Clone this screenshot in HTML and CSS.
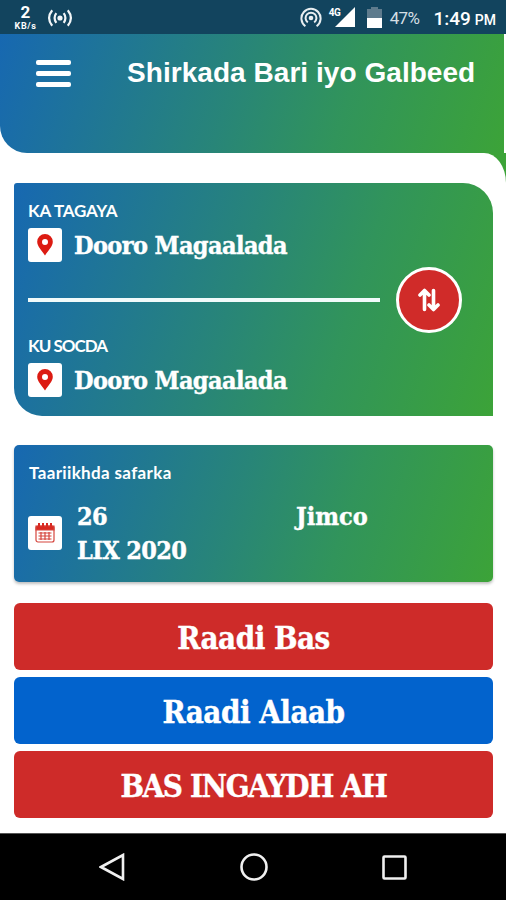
FILE: index.html
```html
<!DOCTYPE html>
<html lang="so">

<head>
    <meta charset="UTF-8">
    <meta name="viewport" content="width=device-width, initial-scale=1.0">
    <title>Shirkada Bari iyo Galbeed</title>
    <link rel="stylesheet" href="styles.css">
</head>

<body>
    <div class="status-bar">
        <div class="net-speed">
            <span class="speed">2</span>
            <span class="unit">KB/s</span>
        </div>
        <svg class="broadcast" width="26" height="18" viewBox="0 0 26 18" fill="none" stroke="#f2f6f8" stroke-width="2.2">
            <circle cx="13" cy="9" r="2.6" fill="#f2f6f8" stroke="none"></circle>
            <path d="M9.300 4.200q-3.400 4.800 0 9.600M16.700 4.200q3.400 4.800 0 9.600M5.200 1.200q-6.200 7.800 0 15.600M20.800 1.200q6.200 7.800 0 15.600"></path>
        </svg>
        <div class="status-right">
            <svg class="hotspot" width="22" height="21" viewBox="0 0 22 21" fill="none" stroke="#e8eef1" stroke-width="2">
                <circle cx="11" cy="11" r="2.3" fill="#e8eef1" stroke="none"></circle>
                <path d="M7.8 15.4a5.4 5.4 0 1 1 6.4 0M5.4 19.2a9.6 9.6 0 1 1 11.2 0"></path>
            </svg>
            <div class="signal">
                <span class="signal-type">4G</span>
                <svg width="20" height="20" viewBox="0 0 20 20">
                    <path d="M20 0v20H0z" fill="#fff"></path>
                </svg>
            </div>
            <svg class="battery" width="15" height="21" viewBox="0 0 15 21">
                <path d="M4 0h7v2h4v9H0V2h4z" fill="#5e7b8d"></path>
                <path d="M0 11h15v10H0z" fill="#fff"></path>
            </svg>
            <span class="percent">47%</span>
            <span class="time">1:49</span>
            <span class="ampm">PM</span>
        </div>
    </div>

    <header class="header">
        <button class="menu-btn" aria-label="Menu">
            <span></span>
            <span></span>
            <span></span>
        </button>
        <h1>Shirkada Bari iyo Galbeed</h1>
    </header>

    <div class="content-wrap">
        <main class="content">
            <section class="card route-card">
                <div class="route-fields">
                    <p class="label label-from">KA TAGAYA</p>
                    <div class="place">
                        <span class="icon-box">
                            <svg width="16" height="22" viewBox="0 0 16 22">
                                <path d="M8 0a7.800 7.800 0 0 0-7.800 7.800C.2 12.500 4.500 16 8 21.600c3.500-5.600 7.800-9.100 7.800-13.800A7.800 7.800 0 0 0 8 0zm0 5a3 3 0 1 1 0 6 3 3 0 0 1 0-6z" fill="#dc1b12" fill-rule="evenodd"></path>
                            </svg>
                        </span>
                        <span class="slab">Dooro Magaalada</span>
                    </div>
                    <div class="divider"></div>
                    <p class="label label-to">KU SOCDA</p>
                    <div class="place">
                        <span class="icon-box">
                            <svg width="16" height="22" viewBox="0 0 16 22">
                                <path d="M8 0a7.800 7.800 0 0 0-7.800 7.800C.2 12.500 4.500 16 8 21.600c3.500-5.600 7.800-9.100 7.800-13.800A7.800 7.800 0 0 0 8 0zm0 5a3 3 0 1 1 0 6 3 3 0 0 1 0-6z" fill="#dc1b12" fill-rule="evenodd"></path>
                            </svg>
                        </span>
                        <span class="slab">Dooro Magaalada</span>
                    </div>
                </div>
                <button class="swap-btn" aria-label="Swap">
                    <svg width="24" height="24" viewBox="0 0 24 24" fill="none" stroke="#fff" stroke-width="3.600" stroke-linecap="round" stroke-linejoin="round">
                        <path d="M7.500 21.500V3M3 7l4.500-4.500L12 7"></path>
                        <path d="M16.500 2.500V21M12 17l4.500 4.500L21 17"></path>
                    </svg>
                </button>
            </section>

            <section class="card date-card">
                <p class="label label-date">Taariikhda safarka</p>
                <div class="date-row">
                    <span class="icon-box">
                        <svg width="20" height="20" viewBox="0 0 20 20" fill="none" stroke="#d5453d" stroke-width="1.200">
                            <rect x="1" y="3" width="18" height="16" rx="2"></rect>
                            <path d="M1 3h18v4H1z" fill="#d92a22"></path>
                            <path d="M4 0v4M8 0v4M12 0v4M16 0v4" stroke="#d92a22" stroke-width="2"></path>
                            <path d="M3.500 10h13M3.500 13h13M3.500 16h13M6 9v8M10 9v8M14 9v8"></path>
                        </svg>
                    </span>
                    <div class="date slab">
                        <div>26</div>
                        <div class="month">LIX 2020</div>
                    </div>
                    <div class="day slab">Jimco</div>
                </div>
            </section>

            <div class="actions">
                <button class="btn btn-red">Raadi Bas</button>
                <button class="btn btn-blue">Raadi Alaab</button>
                <button class="btn btn-red btn-caps">BAS INGAYDH AH</button>
            </div>
        </main>
    </div>

    <nav class="nav-bar">
        <svg width="26" height="28" viewBox="0 0 26 28" fill="none" stroke="#f0f0f0" stroke-width="2.600">
            <path d="M24 2v24L2 14z"></path>
        </svg>
        <svg width="28" height="28" viewBox="0 0 28 28" fill="none" stroke="#f0f0f0" stroke-width="2.600">
            <circle cx="14" cy="14" r="12.500"></circle>
        </svg>
        <svg width="25" height="25" viewBox="0 0 25 25" fill="none" stroke="#f0f0f0" stroke-width="2.600">
            <rect x="1.500" y="1.500" width="22" height="22" rx="1"></rect>
        </svg>
    </nav>
</body>

</html>
```

FILE: styles.css
```css
* {
    margin: 0;
    padding: 0;
    box-sizing: border-box;
}

body {
    width: 506px;
    height: 900px;
    display: flex;
    flex-direction: column;
    background-color: #fff;
    color: #fff;
    font-family: "Liberation Sans", Arial, sans-serif;
    overflow: hidden;
}

button {
    border: none;
    color: #fff;
    cursor: pointer;
}

svg {
    display: block;
    flex-shrink: 0;
}

/* Status bar */
.status-bar {
    height: 34px;
    flex-shrink: 0;
    display: flex;
    padding-left: 13px;
    background-color: #12445e;
    font-family: Roboto, sans-serif;
    white-space: nowrap;
}

.net-speed {
    width: 25px;
    display: flex;
    flex-direction: column;
    align-items: center;
    padding-top: 4px;
    font-weight: 700;
}

.speed {
    font-size: 17px;
    line-height: 16px;
}

.unit {
    margin-top: 2px;
    font-size: 9px;
    line-height: 9px;
    letter-spacing: 0.6px;
}

.broadcast {
    margin: 9px 0 0 9px;
}

.status-right {
    display: flex;
    align-items: flex-start;
    margin-left: auto;
    padding: 7px 10px 0 0;
}

.signal {
    display: flex;
    margin-left: 7px;
}

.signal-type {
    width: 6px;
    font-size: 10px;
    line-height: 11px;
    font-weight: 700;
    letter-spacing: -0.3px;
}

.battery {
    margin-left: 12px;
}

.percent {
    margin-left: 8px;
    font-size: 17px;
    line-height: 22px;
    letter-spacing: -0.6px;
    color: #d5dfe4;
}

.time {
    margin-left: 14px;
    font-size: 19px;
    line-height: 23px;
    font-weight: 500;
}

.ampm {
    margin-left: 4px;
    font-size: 14px;
    line-height: 26px;
    font-weight: 500;
}

/* Header */
.header,
.card {
    background: linear-gradient(108deg, #1768b1, #288578 46%, #31945b 68%, #3ca338);
}

.header {
    width: 504px;
    height: 119px;
    flex-shrink: 0;
    display: flex;
    align-items: flex-start;
    border-bottom-left-radius: 27px;
}

.header h1 {
    margin: 23px 0 0 56px;
    font-size: 28px;
    line-height: 32px;
    font-weight: 700;
    letter-spacing: 0.05px;
    white-space: nowrap;
}

.menu-btn {
    width: 35px;
    margin: 26px 0 0 36px;
    display: flex;
    flex-direction: column;
    gap: 6px;
    background: none;
}

.menu-btn span {
    height: 5px;
    border-radius: 2px;
    background-color: #fff;
}

.content-wrap {
    flex: 1;
    background: linear-gradient(#3ca338, #3ca338) top right / 30px 30px no-repeat;
}

.content {
    height: 100%;
    padding: 30px 13px 0 14px;
    background-color: #fff;
    border-top-right-radius: 22px 30px;
}

/* Cards */
.route-card {
    height: 233px;
    display: flex;
    padding: 17px 31px 0 14px;
    border-radius: 3px 30px 0 28px;
}

.route-fields {
    width: 352px;
}

.label {
    font-family: Lato, sans-serif;
    font-weight: 700;
    font-size: 17px;
    line-height: 22px;
    white-space: nowrap;
}

.label-from {
    letter-spacing: -0.2px;
}

.label-to {
    margin-top: 33px;
    letter-spacing: -1px;
}

.label-date {
    padding-left: 1px;
    letter-spacing: 0.35px;
}

.place {
    height: 34px;
    display: flex;
    align-items: center;
    gap: 12px;
    margin-top: 6px;
}

.icon-box {
    width: 34px;
    height: 34px;
    flex-shrink: 0;
    display: flex;
    align-items: center;
    justify-content: center;
    background-color: #fff;
    border-radius: 3px;
}

.slab,
.btn {
    font-family: "DejaVu Serif Condensed", "DejaVu Serif", serif;
    font-stretch: condensed;
    font-weight: 700;
    white-space: nowrap;
    -webkit-text-stroke: 0.4px #fff;
}

.slab {
    padding-top: 2px;
    font-size: 25px;
    line-height: 34px;
    letter-spacing: -0.6px;
}

.divider {
    height: 4px;
    margin-top: 36px;
    background-color: #f1fafa;
}

.swap-btn {
    width: 66px;
    height: 66px;
    margin: 67px 0 0 auto;
    display: flex;
    align-items: center;
    justify-content: center;
    background-color: #d02b29;
    border: 3px solid #fff;
    border-radius: 50%;
}

.date-card {
    height: 137px;
    margin-top: 29px;
    padding: 17px 14px 0;
    border-radius: 5px;
    box-shadow: 0 2px 3px rgba(0, 0, 0, 0.25);
}

.date-row {
    display: flex;
    align-items: center;
    margin-top: 14px;
}

.date {
    width: 219px;
    margin-left: 15px;
}

.day {
    align-self: flex-start;
    letter-spacing: 0;
}

/* Buttons */
.actions {
    display: flex;
    flex-direction: column;
    gap: 7px;
    margin-top: 21px;
}

.btn {
    height: 67px;
    padding-top: 2px;
    font-size: 31px;
    border-radius: 6px;
    letter-spacing: -0.5px;
}

.btn-caps {
    letter-spacing: -1.4px;
}

.btn-red {
    background-color: #ce2b29;
}

.btn-blue {
    background-color: #0263cd;
}

.nav-bar {
    height: 67px;
    flex-shrink: 0;
    display: flex;
    align-items: center;
    justify-content: space-between;
    padding: 0 99px;
    background-color: #000;
    border-top: 1px solid #555;
}
```
